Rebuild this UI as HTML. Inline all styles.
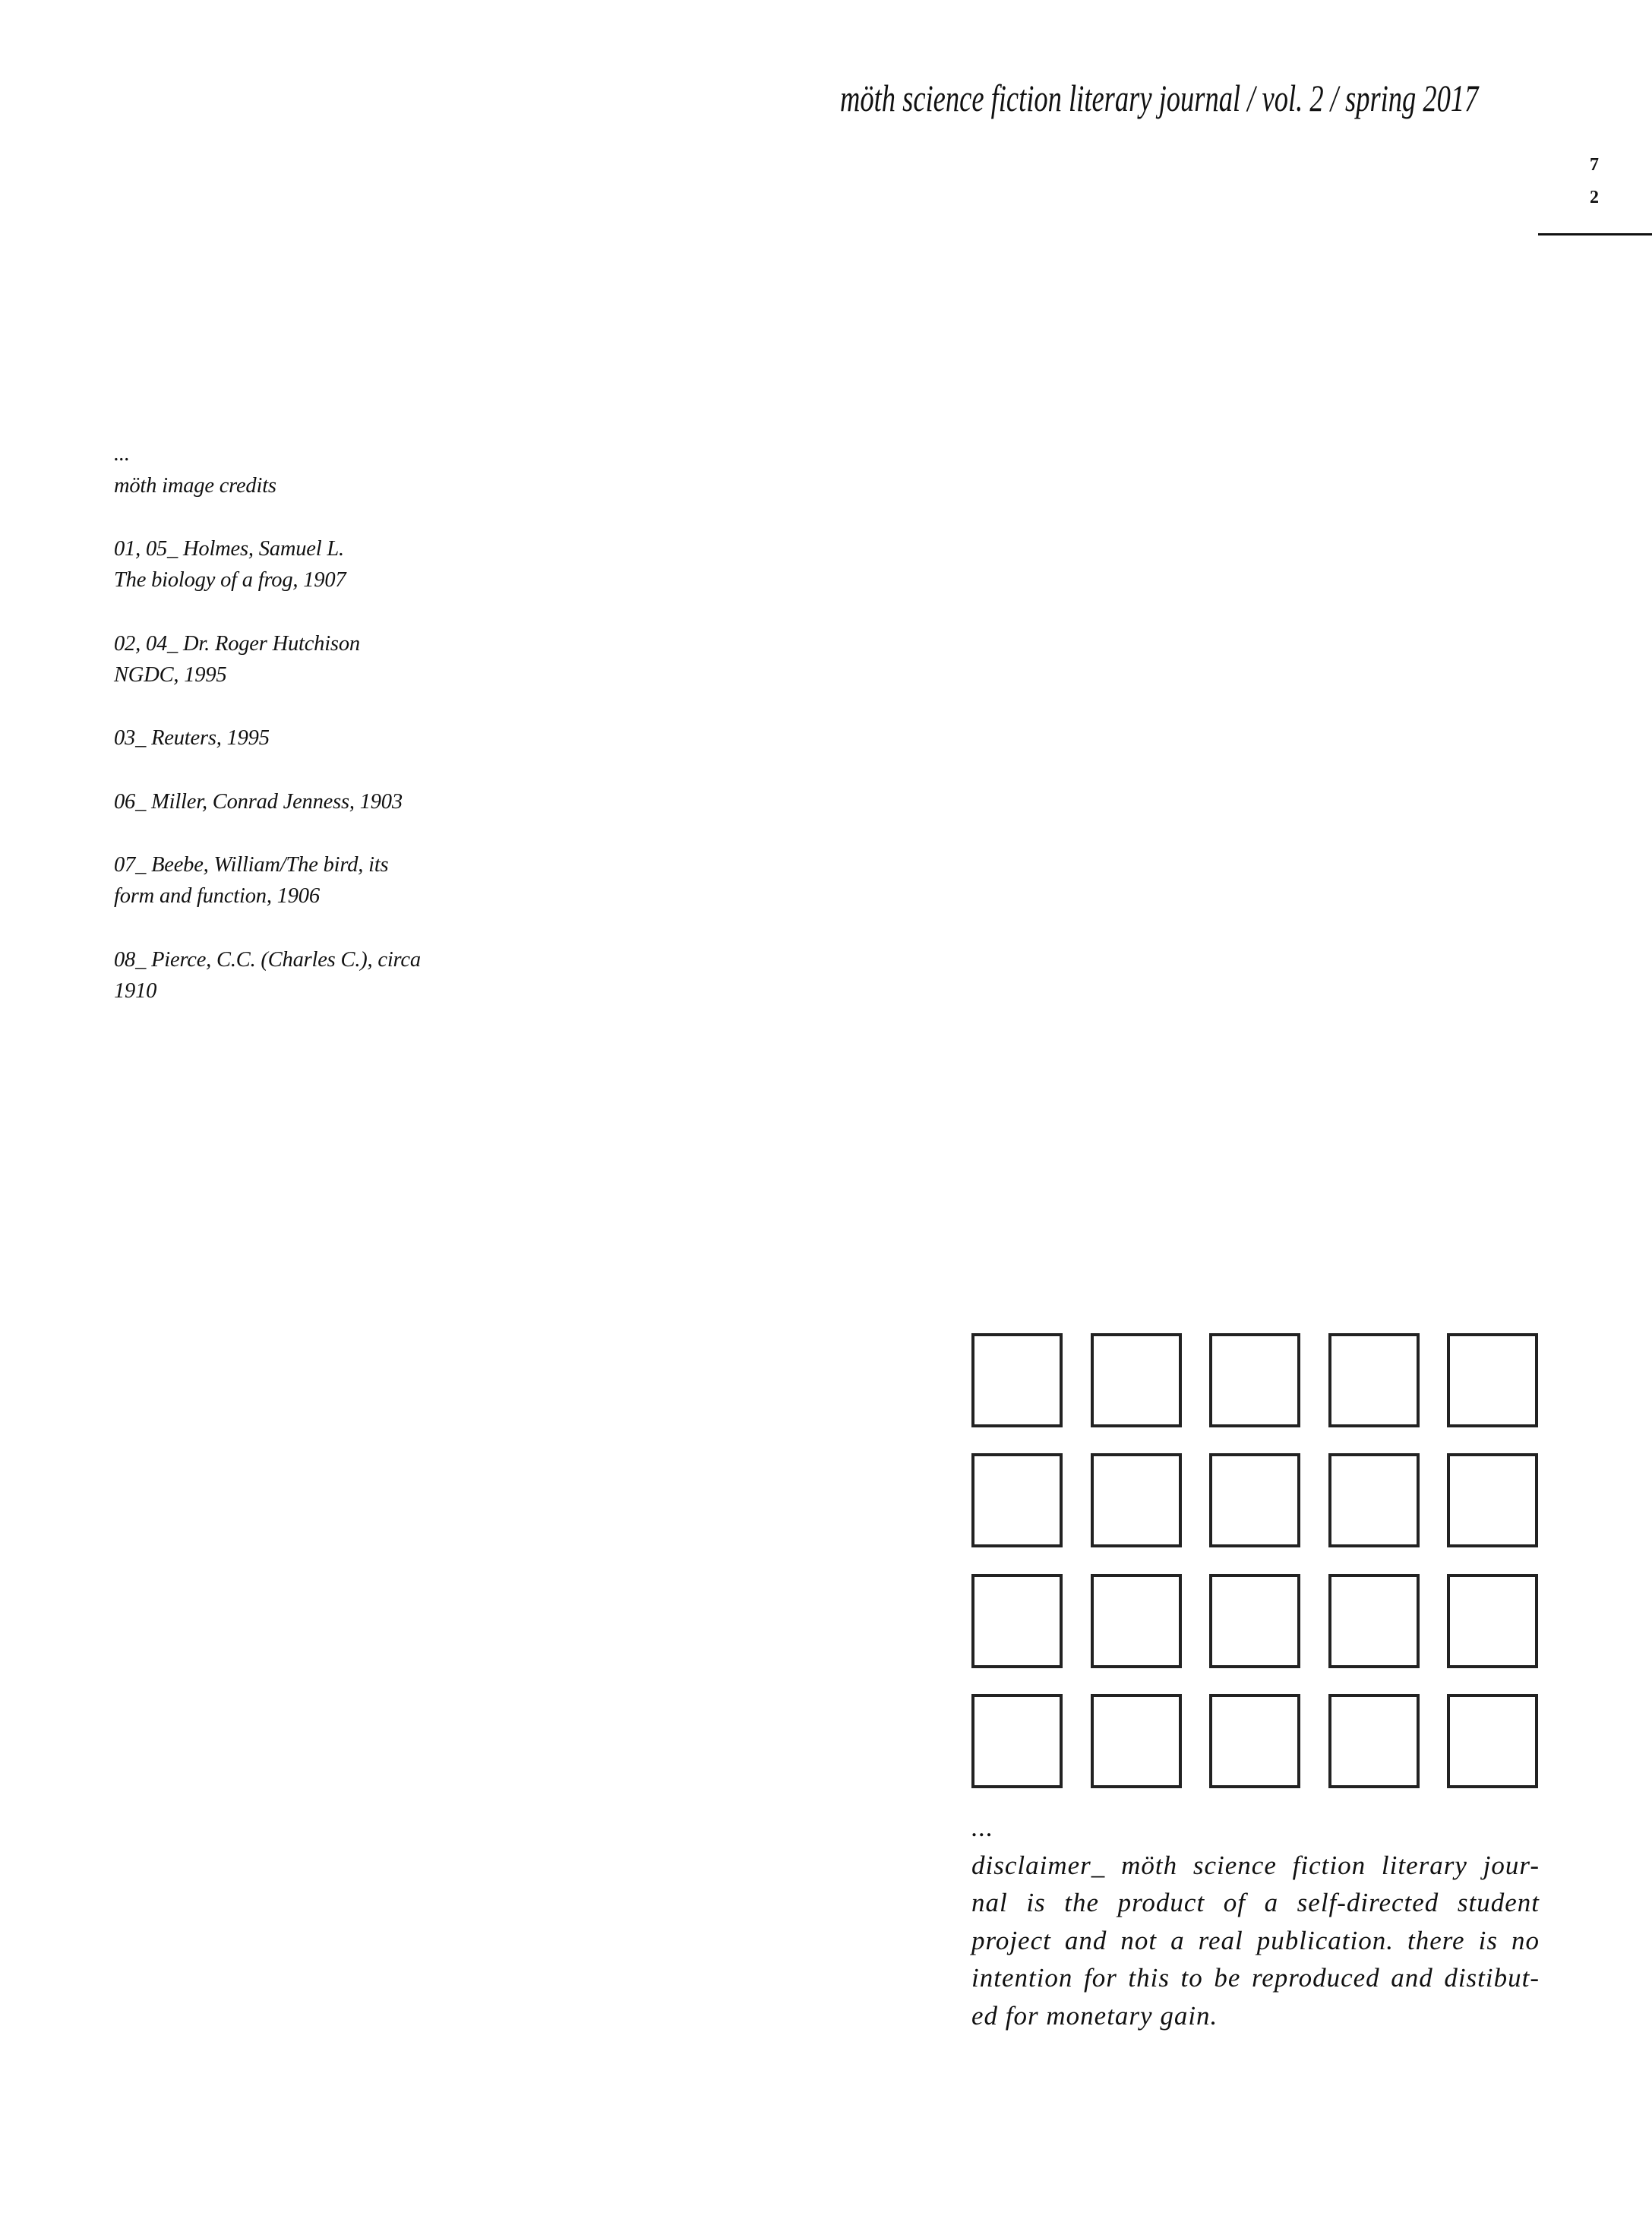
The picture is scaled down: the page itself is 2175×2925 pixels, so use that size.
<!DOCTYPE html>
<html><head><meta charset="utf-8"><style>
html,body{margin:0;padding:0;background:#fff;}
body{width:2175px;height:2925px;position:relative;overflow:hidden;font-family:"Liberation Serif",serif;color:#111;}
.hdr{position:absolute;left:1106px;top:100px;font-style:italic;font-size:50px;white-space:nowrap;transform:scaleX(0.73);transform-origin:left top;}
.pn{position:absolute;left:2093px;font-size:24px;font-weight:bold;}
.rule{position:absolute;left:2025px;top:307px;width:150px;height:3px;background:#111;}
.cred{position:absolute;left:150px;top:577px;font-style:italic;font-size:28.5px;line-height:41.6px;letter-spacing:-0.2px;}
.grid{position:absolute;left:1279px;top:1755px;}
.sq{position:absolute;width:112px;height:116px;border:4px solid #222;}
.disc{position:absolute;left:1279px;top:2381px;width:748px;font-style:italic;font-size:35px;line-height:49.5px;letter-spacing:1px;}
.disc div{text-align:justify;text-align-last:justify;white-space:nowrap;}
.disc div.l{text-align-last:left;}
</style></head><body>
<div class="hdr">möth science fiction literary journal / vol. 2 / spring 2017</div>
<div class="pn" style="top:204px">7</div>
<div class="pn" style="top:247px">2</div>
<div class="rule"></div>
<div class="cred">...<br>möth image credits<br><br>01, 05_ Holmes, Samuel L.<br>The biology of a frog, 1907<br><br>02, 04_ Dr. Roger Hutchison<br>NGDC, 1995<br><br>03_ Reuters, 1995<br><br>06_ Miller, Conrad Jenness, 1903<br><br>07_ Beebe, William/The bird, its<br>form and function, 1906<br><br>08_ Pierce, C.C. (Charles C.), circa<br>1910</div>
<div class="grid">
<div class="sq" style="left:0;top:0"></div><div class="sq" style="left:157px;top:0"></div><div class="sq" style="left:313px;top:0"></div><div class="sq" style="left:470px;top:0"></div><div class="sq" style="left:626px;top:0"></div>
<div class="sq" style="left:0;top:158px"></div><div class="sq" style="left:157px;top:158px"></div><div class="sq" style="left:313px;top:158px"></div><div class="sq" style="left:470px;top:158px"></div><div class="sq" style="left:626px;top:158px"></div>
<div class="sq" style="left:0;top:317px"></div><div class="sq" style="left:157px;top:317px"></div><div class="sq" style="left:313px;top:317px"></div><div class="sq" style="left:470px;top:317px"></div><div class="sq" style="left:626px;top:317px"></div>
<div class="sq" style="left:0;top:475px"></div><div class="sq" style="left:157px;top:475px"></div><div class="sq" style="left:313px;top:475px"></div><div class="sq" style="left:470px;top:475px"></div><div class="sq" style="left:626px;top:475px"></div>
</div>
<div class="disc">
<div class="l">...</div>
<div>disclaimer_ möth science fiction literary jour-</div>
<div>nal is the product of a self-directed student</div>
<div>project and not a real publication. there is no</div>
<div>intention for this to be reproduced and distibut-</div>
<div class="l">ed for monetary gain.</div>
</div>
</body></html>
